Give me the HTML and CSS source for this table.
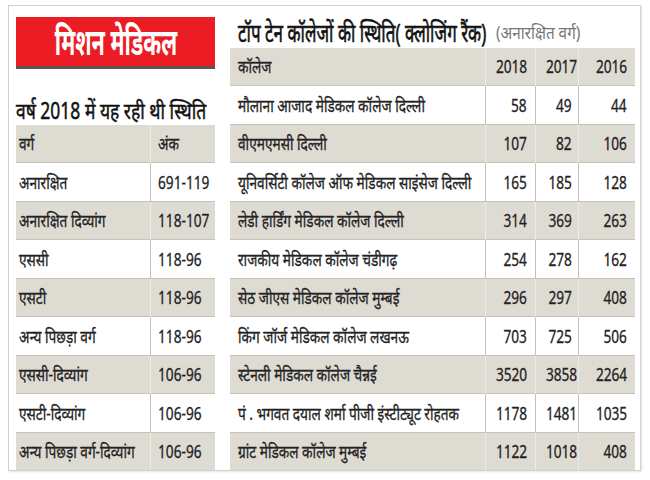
FILE: index.html
```html
<!DOCTYPE html>
<html lang="hi">
<head>
<meta charset="utf-8">
<link rel="stylesheet" href="styles.css">
</head>
<body>
<div class="frame">
  <div class="left">
    <div class="banner"><span class="sq">मिशन मेडिकल</span></div>
    <div class="ltitle"><span class="sq">वर्ष 2018 में यह रही थी स्थिति</span></div>
    <table class="tbl ltbl">
      <colgroup><col class="w1"><col class="w2"></colgroup>
      <tr class="g"><td class="c1"><span class="sq">वर्ग</span></td><td class="c2"><span class="sq">अंक</span></td></tr>
      <tr><td class="c1"><span class="sq">अनारक्षित</span></td><td class="c2"><span class="sq">691-119</span></td></tr>
      <tr class="g"><td class="c1"><span class="sq">अनारक्षित दिव्यांग</span></td><td class="c2"><span class="sq">118-107</span></td></tr>
      <tr><td class="c1"><span class="sq">एससी</span></td><td class="c2"><span class="sq">118-96</span></td></tr>
      <tr class="g"><td class="c1"><span class="sq">एसटी</span></td><td class="c2"><span class="sq">118-96</span></td></tr>
      <tr><td class="c1"><span class="sq">अन्य पिछड़ा वर्ग</span></td><td class="c2"><span class="sq">118-96</span></td></tr>
      <tr class="g"><td class="c1"><span class="sq">एससी-दिव्यांग</span></td><td class="c2"><span class="sq">106-96</span></td></tr>
      <tr><td class="c1"><span class="sq">एसटी-दिव्यांग</span></td><td class="c2"><span class="sq">106-96</span></td></tr>
      <tr class="g"><td class="c1"><span class="sq">अन्य पिछड़ा वर्ग-दिव्यांग</span></td><td class="c2"><span class="sq">106-96</span></td></tr>
    </table>
  </div>
  <div class="right">
    <div class="rtitle"><span class="sq">टॉप टेन कॉलेजों की स्थिति( क्लोजिंग रैंक)</span><span class="sub sq">(अनारक्षित वर्ग)</span></div>
    <table class="tbl rtbl">
      <colgroup><col class="wk"><col class="wa"><col class="wb"><col class="wc"></colgroup>
      <tr class="g"><td class="k"><span class="sq">कॉलेज</span></td><td class="n"><span class="sq">2018</span></td><td class="n"><span class="sq">2017</span></td><td class="n"><span class="sq">2016</span></td></tr>
      <tr><td class="k"><span class="sq">मौलाना आजाद मेडिकल कॉलेज दिल्ली</span></td><td class="n"><span class="sq">58</span></td><td class="n"><span class="sq">49</span></td><td class="n"><span class="sq">44</span></td></tr>
      <tr class="g"><td class="k"><span class="sq">वीएमएमसी दिल्ली</span></td><td class="n"><span class="sq">107</span></td><td class="n"><span class="sq">82</span></td><td class="n"><span class="sq">106</span></td></tr>
      <tr><td class="k"><span class="sq">यूनिवर्सिटी कॉलेज ऑफ मेडिकल साइंसेज दिल्ली</span></td><td class="n"><span class="sq">165</span></td><td class="n"><span class="sq">185</span></td><td class="n"><span class="sq">128</span></td></tr>
      <tr class="g"><td class="k"><span class="sq">लेडी हार्डिंग मेडिकल कॉलेज दिल्ली</span></td><td class="n"><span class="sq">314</span></td><td class="n"><span class="sq">369</span></td><td class="n"><span class="sq">263</span></td></tr>
      <tr><td class="k"><span class="sq">राजकीय मेडिकल कॉलेज चंडीगढ़</span></td><td class="n"><span class="sq">254</span></td><td class="n"><span class="sq">278</span></td><td class="n"><span class="sq">162</span></td></tr>
      <tr class="g"><td class="k"><span class="sq">सेठ जीएस मेडिकल कॉलेज मुम्बई</span></td><td class="n"><span class="sq">296</span></td><td class="n"><span class="sq">297</span></td><td class="n"><span class="sq">408</span></td></tr>
      <tr><td class="k"><span class="sq">किंग जॉर्ज मेडिकल कॉलेज लखनऊ</span></td><td class="n"><span class="sq">703</span></td><td class="n"><span class="sq">725</span></td><td class="n"><span class="sq">506</span></td></tr>
      <tr class="g"><td class="k"><span class="sq">स्टेनली मेडिकल कॉलेज चैन्नई</span></td><td class="n"><span class="sq">3520</span></td><td class="n"><span class="sq">3858</span></td><td class="n"><span class="sq">2264</span></td></tr>
      <tr><td class="k"><span class="sq">पं . भगवत दयाल शर्मा पीजी इंस्टीट्यूट रोहतक</span></td><td class="n"><span class="sq">1178</span></td><td class="n"><span class="sq">1481</span></td><td class="n"><span class="sq">1035</span></td></tr>
      <tr class="g"><td class="k"><span class="sq">ग्रांट मेडिकल कॉलेज मुम्बई</span></td><td class="n"><span class="sq">1122</span></td><td class="n"><span class="sq">1018</span></td><td class="n"><span class="sq">408</span></td></tr>
    </table>
  </div>
</div>
</body>
</html>
```
FILE: styles.css
```css
html, body { margin: 0; padding: 0; background: #fff; }
body {
  font-family: "Noto Sans", "Liberation Sans", sans-serif;
  color: #222;
  width: 650px;
  height: 480px;
  overflow: hidden;
}
.frame {
  margin: 5px 0 0 8px;
  width: 633px;
  height: 466px;
  border: 1px solid #d2d2d2;
  box-sizing: border-box;
  display: flex;
  gap: 15px;
  padding: 11px 0 0 7px;
  box-shadow: 1px 1px 2px #e4e4e4;
}
.sq {
  display: inline-block;
  transform: scaleX(0.76);
  transform-origin: 0 50%;
}
.left { width: 199px; display: flex; flex-direction: column; flex: none; }
.banner {
  height: 51px;
  background: #ec1c24;
  border-bottom: 3px solid #5b5656;
  color: #fff;
  font-weight: 700;
  font-size: 36px;
  line-height: 1;
  display: flex;
  align-items: center;
  justify-content: center;
  white-space: nowrap;
}
.banner .sq { transform: scaleX(0.6); transform-origin: 50% 50%; }
.ltitle {
  height: 57px;
  font-size: 23px;
  line-height: 1;
  color: #111;
  -webkit-text-stroke: 0.5px #111;
  display: flex;
  align-items: flex-end;
  padding-bottom: 3px;
  box-sizing: border-box;
  white-space: nowrap;
}
.tbl {
  border-collapse: collapse;
  table-layout: fixed;
  font-size: 18px;
  line-height: 1;
  -webkit-text-stroke: 0.3px #222;
}
.tbl td {
  height: 37.5px;
  padding: 0;
  white-space: nowrap;
  overflow: visible;
  border-top: 1px solid #c6c2ba;
  border-right: 1px solid #c3c0bb;
  vertical-align: middle;
}
.tbl td:last-child { border-right: none; }
.tbl tr:first-child td { border-top: none; }
.tbl tr.g td { background: #dedbd3; border-right-color: #ecebe6; }
.tbl tr.g td:last-child { border-right: none; }
.ltbl { width: 199px; }
.w1 { width: 134px; }
.w2 { width: 65px; }
.ltbl .c1 { padding-left: 3px; }
.ltbl .c2 { padding-left: 7px; }
.right { width: 405px; display: flex; flex-direction: column; flex: none; }
.rtitle {
  height: 36px;
  font-size: 25px;
  line-height: 1;
  color: #111;
  white-space: nowrap;
  display: flex;
  align-items: center;
  padding-left: 8px;
  box-sizing: border-box;
}
.rtitle .sq { transform: scaleX(0.68); -webkit-text-stroke: 0.6px #111; }
.rtitle .sub.sq {
  font-size: 18px;
  color: #777;
  -webkit-text-stroke: 0;
  transform: scaleX(0.85);
  margin-left: -107px;
}
.rtbl { width: 405px; }
.wk { width: 255px; }
.wa { width: 50px; }
.wb { width: 43px; }
.wc { width: 57px; }
.rtbl .k { padding-left: 8px; }
.rtbl .n { text-align: right; padding-right: 8px; }
.rtbl .n:nth-child(3) { padding-right: 6px; }
.rtbl .n .sq { transform-origin: 100% 50%; }
```
